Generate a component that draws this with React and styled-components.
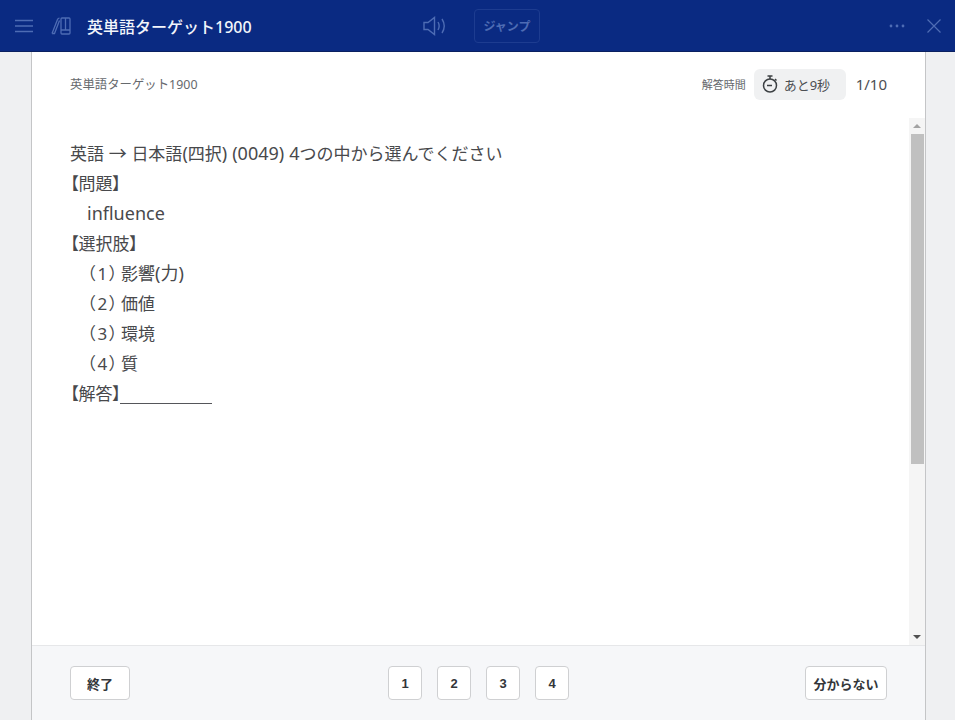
import React from 'react'
import styled, { createGlobalStyle } from 'styled-components'

const GlobalStyle = createGlobalStyle`
  html, body {
    margin: 0;
    padding: 0;
    height: 100%;
    background: #eff0f2;
    overflow: hidden;
  }
  body {
    font-family: "Noto Sans", "Noto Sans CJK JP", sans-serif;
    color: #3c4043;
  }
`

const Page = styled.div`
  width: 955px;
  height: 720px;
  display: flex;
  flex-direction: column;
`

const Header = styled.header`
  height: 51px;
  flex: none;
  display: flex;
  align-items: center;
  background: #0a2a82;
  border-bottom: 1px solid #0a2060;
  color: #fff;
`

const Icon = styled.svg`
  flex: none;
  display: block;
  margin-left: ${props => props.$left || 0}px;
  margin-right: ${props => props.$right || 0}px;
  stroke: ${props => props.$color || '#4e6cb4'};
  fill: ${props => props.$fill || 'none'};
`

const AppTitle = styled.h1`
  margin: 0 0 0 16px;
  width: 336px;
  flex: none;
  font-size: 16px;
  font-weight: 500;
  color: #f2f5fb;
  white-space: nowrap;
`

const JumpButton = styled.div`
  margin-left: 27px;
  width: 66px;
  height: 34px;
  box-sizing: border-box;
  flex: none;
  display: flex;
  align-items: center;
  justify-content: center;
  border: 1px solid #1d3c90;
  border-radius: 4px;
  font-size: 12px;
  font-weight: 700;
  color: #4e6cb4;
`

const Spacer = styled.div`
  flex: 1;
`

const Body = styled.div`
  flex: 1;
  min-height: 0;
  display: flex;
  justify-content: flex-start;
  padding-left: 31px;
`

const Card = styled.main`
  width: 895px;
  box-sizing: border-box;
  border-left: 1px solid #c4c5c7;
  border-right: 1px solid #c4c5c7;
  background: #fff;
  display: flex;
  flex-direction: column;
`

const StatusRow = styled.div`
  height: 66px;
  flex: none;
  box-sizing: border-box;
  display: flex;
  align-items: center;
  padding: 0 38px 2px 38px;
`

const BookName = styled.span`
  flex: 1;
  font-size: 12.4px;
  color: #66696d;
`

const TimerLabel = styled.span`
  font-size: 11px;
  color: #66696d;
  margin-right: 8px;
`

const TimerPill = styled.div`
  width: 92px;
  height: 31px;
  box-sizing: border-box;
  padding-left: 8px;
  display: flex;
  align-items: center;
  gap: 6px;
  border-radius: 6px;
  background: #f0f1f2;
  font-size: 13px;
  color: #4c4f53;
`

const Progress = styled.span`
  margin-left: 10px;
  font-size: 15px;
  color: #4c4f53;
`

const ContentRow = styled.div`
  flex: 1;
  min-height: 0;
  display: flex;
`

const Question = styled.div`
  flex: 1;
  box-sizing: border-box;
  padding: 21px 0 0 38px;
  font-size: 17px;
  color: #48494c;
`

const Line = styled.div`
  height: 30px;
  line-height: 30px;
  white-space: nowrap;
  padding-left: ${props => (props.$indent ? 17 : 0)}px;
`

// latin runs are a little larger than the kanji next to them
const Latin = styled.span`
  font-size: 18px;
  line-height: 1;
  margin-left: ${props => props.$gap || 0}px;
`

const Label = styled.span`
  font-feature-settings: "palt";
`

const OptionNumber = styled.span`
  display: inline-block;
  width: 34px;
  font-size: 17px;
  letter-spacing: 2px;
  font-feature-settings: "palt";
`

const Blank = styled.span`
  display: inline-block;
  width: 92px;
  height: 18px;
  margin: 0 0 -4px -1px;
  border-bottom: 1px solid #55565a;
`

const Scrollbar = styled.div`
  width: 16px;
  flex: none;
  display: flex;
  flex-direction: column;
  align-items: center;
  background: #f5f5f5;
`

const ScrollArrow = styled.div`
  height: 16px;
  flex: none;
  display: flex;
  align-items: center;
  justify-content: center;
  &::before {
    content: '';
    border-left: 4px solid transparent;
    border-right: 4px solid transparent;
    ${props => (props.$down
      ? 'border-top: 4px solid #505050;'
      : 'border-bottom: 4px solid #a3a3a3;')}
  }
`

const ScrollThumb = styled.div`
  width: 13px;
  height: 330px;
  flex: none;
  background: #c0c0c0;
`

const Footer = styled.footer`
  height: 75px;
  flex: none;
  box-sizing: border-box;
  border-top: 1px solid #e6e7e9;
  background: #f6f7f9;
  padding: 0 38px;
  display: grid;
  grid-template-columns: 1fr auto 1fr;
  align-items: center;
`

const FooterAction = styled.div`
  display: flex;
  justify-content: ${props => (props.$end ? 'flex-end' : 'flex-start')};
`

const Choices = styled.div`
  display: flex;
  gap: 15px;
`

const Button = styled.button`
  height: 34px;
  min-width: 34px;
  width: ${props => (props.$width ? `${props.$width}px` : 'auto')};
  box-sizing: border-box;
  padding: 0;
  border: 1px solid #cfd0d2;
  border-radius: 4px;
  background: #fff;
  font-family: "Liberation Sans", "Noto Sans CJK JP", sans-serif;
  font-size: 13px;
  font-weight: 700;
  color: #33363a;
`

const options = [
  ['（1）', '影響', '(力)'],
  ['（2）', '価値'],
  ['（3）', '環境'],
  ['（4）', '質'],
]

const App = () => (
  <Page>
    <GlobalStyle />
    <Header>
      <Icon $left={15} width="18" height="14" viewBox="0 0 18 14" strokeWidth="1.3">
        <path d="M0 1.500h18M0 7h18M0 12.500h18" />
      </Icon>
      <Icon $left={18} width="20" height="18" viewBox="0 0 20 18" strokeWidth="1.3">
        <path d="M1 16.500 6.500 2.500Q7 1.200 8.500 1.200M1 16.500h2.500L8.500 3.500" />
        <rect x="10" y="1" width="9" height="16" rx="1" />
        <path d="M14.500 1v12M10 13h9" />
      </Icon>
      <AppTitle>英単語ターゲット1900</AppTitle>
      <Icon width="24" height="20" viewBox="0 0 24 20" strokeWidth="1.4">
        <path d="M1 6.500h4L11.500 1.500v17L5 13.500H1z" />
        <path d="M15 6q2.300 4 0 8M19 3q4.500 7 0 14" />
      </Icon>
      <JumpButton>ジャンプ</JumpButton>
      <Spacer />
      <Icon $fill="#4e6cb4" width="16" height="4" viewBox="0 0 16 4" strokeWidth="0">
        <circle cx="2" cy="2" r="1.400" />
        <circle cx="8" cy="2" r="1.400" />
        <circle cx="14" cy="2" r="1.400" />
      </Icon>
      <Icon $left={22} $right={14} width="14" height="14" viewBox="0 0 14 14" strokeWidth="1.200">
        <path d="M.5.500l13 13M13.500.500l-13 13" />
      </Icon>
    </Header>
    <Body>
      <Card>
        <StatusRow>
          <BookName>英単語ターゲット1900</BookName>
          <TimerLabel>解答時間</TimerLabel>
          <TimerPill>
            <Icon $color="#3c4043" width="16" height="18" viewBox="0 0 16 18" strokeWidth="1.500">
              <circle cx="8" cy="10.500" r="6.500" />
              <path d="M5.500 1h5M8 1v3M5 10.500h5" />
              <path d="M13 4l1.500 1.500" />
            </Icon>
            あと9秒
          </TimerPill>
          <Progress>1/10</Progress>
        </StatusRow>
        <ContentRow>
          <Question>
            <Line>
              英語<Latin> → </Latin>日本語<Latin>(</Latin>四択<Latin>)</Latin>
              <Latin $gap={5}>(0049)</Latin>
              <Latin $gap={5}>4</Latin>つの中から選んでください
            </Line>
            <Line><Label>【問題】</Label></Line>
            <Line $indent><Latin>influence</Latin></Line>
            <Line><Label>【選択肢】</Label></Line>
            {options.map(([number, word, rest]) => (
              <Line $indent key={number}>
                <OptionNumber>{number}</OptionNumber>{word}{rest && <Latin>{rest}</Latin>}
              </Line>
            ))}
            <Line><Label>【解答】</Label><Blank /></Line>
          </Question>
          <Scrollbar>
            <ScrollArrow />
            <ScrollThumb />
            <Spacer />
            <ScrollArrow $down />
          </Scrollbar>
        </ContentRow>
        <Footer>
          <FooterAction>
            <Button $width={60}>終了</Button>
          </FooterAction>
          <Choices>
            <Button>1</Button>
            <Button>2</Button>
            <Button>3</Button>
            <Button>4</Button>
          </Choices>
          <FooterAction $end>
            <Button $width={82}>分からない</Button>
          </FooterAction>
        </Footer>
      </Card>
    </Body>
  </Page>
)

export default App
